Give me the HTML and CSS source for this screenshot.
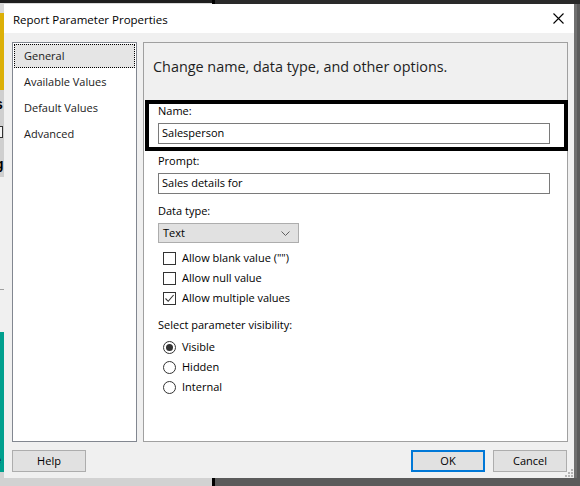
FILE: index.html
```html
<!DOCTYPE html>
<html>
<head>
<meta charset="utf-8">
<link rel="stylesheet" href="styles.css">
</head>
<body>
<div class="desk">
  <div class="bgapp">
    <span class="bg-s">s</span>
    <span class="bg-box"></span>
    <span class="bg-g">g</span>
    <span class="bg-e">e</span>
  </div>
  <div class="dialog">
    <div class="titlebar">
      <span class="title">Report Parameter Properties</span>
      <svg class="close" width="11" height="11" viewBox="0 0 11 11"><path d="M0.5 0.5 L10.5 10.5 M10.5 0.5 L0.5 10.5" stroke="#000" stroke-width="1.1" fill="none"/></svg>
    </div>
    <div class="dbody">
      <div class="main">
        <ul class="nav">
          <li class="item selected">General</li>
          <li class="item">Available Values</li>
          <li class="item">Default Values</li>
          <li class="item">Advanced</li>
        </ul>
        <div class="panel">
          <div class="panel-head">Change name, data type, and other options.</div>
          <div class="focusbox">
            <div class="lbl">Name:</div>
            <div class="input">Salesperson</div>
          </div>
          <div class="content">
            <div class="lbl first">Prompt:</div>
            <div class="input">Sales details for</div>
            <div class="lbl gap">Data type:</div>
            <div class="select">
              <span>Text</span>
              <svg class="chev" width="9" height="5" viewBox="0 0 9 5"><path d="M0.5 0.5 L4.5 4.5 L8.5 0.5" stroke="#606060" stroke-width="1" fill="none"/></svg>
            </div>
            <div class="checks">
              <div class="row"><span class="cb"></span><span class="txt">Allow blank value ("")</span></div>
              <div class="row"><span class="cb"></span><span class="txt">Allow null value</span></div>
              <div class="row"><span class="cb"><svg width="11" height="11" viewBox="0 0 11 11"><path d="M1.5 5.5 L4.2 8.3 L9.6 2" stroke="#333" stroke-width="1.1" fill="none"/></svg></span><span class="txt">Allow multiple values</span></div>
            </div>
            <div class="lbl gap">Select parameter visibility:</div>
            <div class="radios">
              <div class="row"><span class="rb on"></span><span class="txt">Visible</span></div>
              <div class="row"><span class="rb"></span><span class="txt">Hidden</span></div>
              <div class="row"><span class="rb"></span><span class="txt">Internal</span></div>
            </div>
          </div>
        </div>
      </div>
      <div class="footer">
        <button class="btn">Help</button>
        <div class="spacer"></div>
        <button class="btn ok">OK</button>
        <button class="btn">Cancel</button>
      </div>
      <svg class="grip" width="8" height="8" viewBox="0 0 8 8"><g fill="#b4b4b4"><rect x="6" y="0" width="2" height="2"/><rect x="3" y="3" width="2" height="2"/><rect x="6" y="3" width="2" height="2"/><rect x="0" y="6" width="2" height="2"/><rect x="3" y="6" width="2" height="2"/><rect x="6" y="6" width="2" height="2"/></g></svg>
    </div>
  </div>
</div>
</body>
</html>
```

FILE: styles.css
```css
* { box-sizing: border-box; }
html, body { margin: 0; padding: 0; }
body {
  width: 580px;
  height: 486px;
  overflow: hidden;
  font-family: "Open Sans", "Noto Sans", sans-serif;
  font-size: 11px;
  color: #000;
}
.desk {
  position: relative;
  width: 580px;
  height: 486px;
  background: linear-gradient(to bottom, #2a2a2a 0 4px, #5b5b5b 4px);
  overflow: hidden;
}
.bgapp {
  position: absolute;
  left: 0;
  top: 0;
  width: 215px;
  height: 486px;
  border-right: 3px solid #000;
  background: linear-gradient(to bottom,
    #1e1e1e 0 3px, #d9d9d9 3px 13px, #dcb007 13px 90px,
    #cfcfcf 90px 177px, #f0f0f0 177px 289px, #a0a0a0 289px 290px,
    #f0f0f0 290px 332px, #00a08e 332px 472px, #d2d2d2 472px);
}
.bg-s { position: absolute; left: -5px; top: 96px; font: bold 14px "Liberation Sans", sans-serif; }
.bg-g { position: absolute; left: -5px; top: 156px; font: bold 14px "Liberation Sans", sans-serif; }
.bg-e { position: absolute; left: -6px; top: 452px; font: 13px "Liberation Sans", sans-serif; color: #111; }
.bg-box { position: absolute; left: -8px; top: 126px; width: 11px; height: 12px; border: 1px solid #333; background: #f4f4f4; }

.dialog {
  position: absolute;
  left: 4px;
  top: 4px;
  width: 570px;
  height: 474px;
  background: #f0f0f0;
  display: flex;
  flex-direction: column;
  box-shadow: 3px 0 0 #707070;
}
.titlebar {
  height: 29px;
  background: #fff;
  display: flex;
  align-items: center;
  padding: 0 10px 0 9px;
  flex: none;
}
.title {
  flex: 1;
  font-size: 11.5px;
  color: #000;
  margin-top: 1px;
}
.close { display: block; }
.dbody {
  flex: 1;
  position: relative;
  padding: 9px 6px 0 8px;
  display: flex;
  flex-direction: column;
}
.main {
  display: flex;
  gap: 6px;
  height: 400px;
}
.nav {
  list-style: none;
  margin: 0;
  padding: 1px 1px 0 1px;
  width: 125px;
  background: #fff;
  border: 1px solid #828790;
}
.item {
  height: 24px;
  line-height: 23px;
  margin-bottom: 2px;
  padding-left: 10px;
  color: #1a1a1a;
  white-space: nowrap;
}
.item.selected {
  background: #e5e5e5;
  outline: 1px dotted #000;
  outline-offset: -1px;
}
.panel {
  width: 425px;
  background: #fff;
  border: 1px solid #a0a0a0;
}
.panel-head {
  height: 57px;
  background: #f0f0f0;
  padding: 13px 0 0 9px;
  font-size: 14.4px;
  line-height: 22px;
  color: #1e1e1e;
  white-space: nowrap;
}
.focusbox {
  margin: 0 -1px 0 1px;
  border: 4px solid #000;
  padding: 0 14px 3px 9px;
}
.lbl {
  height: 16px;
  line-height: 14px;
  margin-bottom: 3px;
  white-space: nowrap;
}
.lbl.first { margin-top: 3px; }
.lbl.gap { margin-top: 10px; }
.input {
  height: 21px;
  border: 1px solid #7a7a7a;
  background: #fff;
  line-height: 18px;
  padding-left: 3px;
}
.content {
  padding: 0 17px 0 14px;
}
.select {
  width: 141px;
  height: 20px;
  background: #e1e1e1;
  border: 1px solid #adadad;
  display: flex;
  align-items: center;
  justify-content: space-between;
  padding: 0 8px 1px 4px;
}
.chev { display: block; margin-top: 1px; }
.checks { margin-top: 5px; }
.row {
  height: 20px;
  display: flex;
  align-items: center;
  gap: 6px;
  padding-left: 5px;
  white-space: nowrap;
}
.txt { padding-bottom: 2px; }
.cb {
  width: 13px;
  height: 13px;
  border: 1px solid #333;
  background: #fff;
  display: flex;
  align-items: center;
  justify-content: center;
  flex: none;
}
.cb svg { display: block; }
.rb {
  width: 13px;
  height: 13px;
  border: 1px solid #333;
  border-radius: 50%;
  background: #fff;
  flex: none;
  display: flex;
  align-items: center;
  justify-content: center;
}
.rb.on::after {
  content: "";
  width: 7px;
  height: 7px;
  border-radius: 50%;
  background: #333;
}
.footer {
  display: flex;
  gap: 8px;
  padding: 8px 1px 0 0;
}
.spacer { flex: 1; }
.btn {
  width: 74px;
  height: 22px;
  background: #e1e1e1;
  border: 1px solid #adadad;
  font-family: inherit;
  font-size: 11px;
  color: #000;
  padding: 0 0 1px 0;
  margin: 0;
}
.btn.ok { border: 2px solid #0078d7; }
.grip {
  position: absolute;
  right: 1px;
  bottom: 1px;
  display: block;
}
```
